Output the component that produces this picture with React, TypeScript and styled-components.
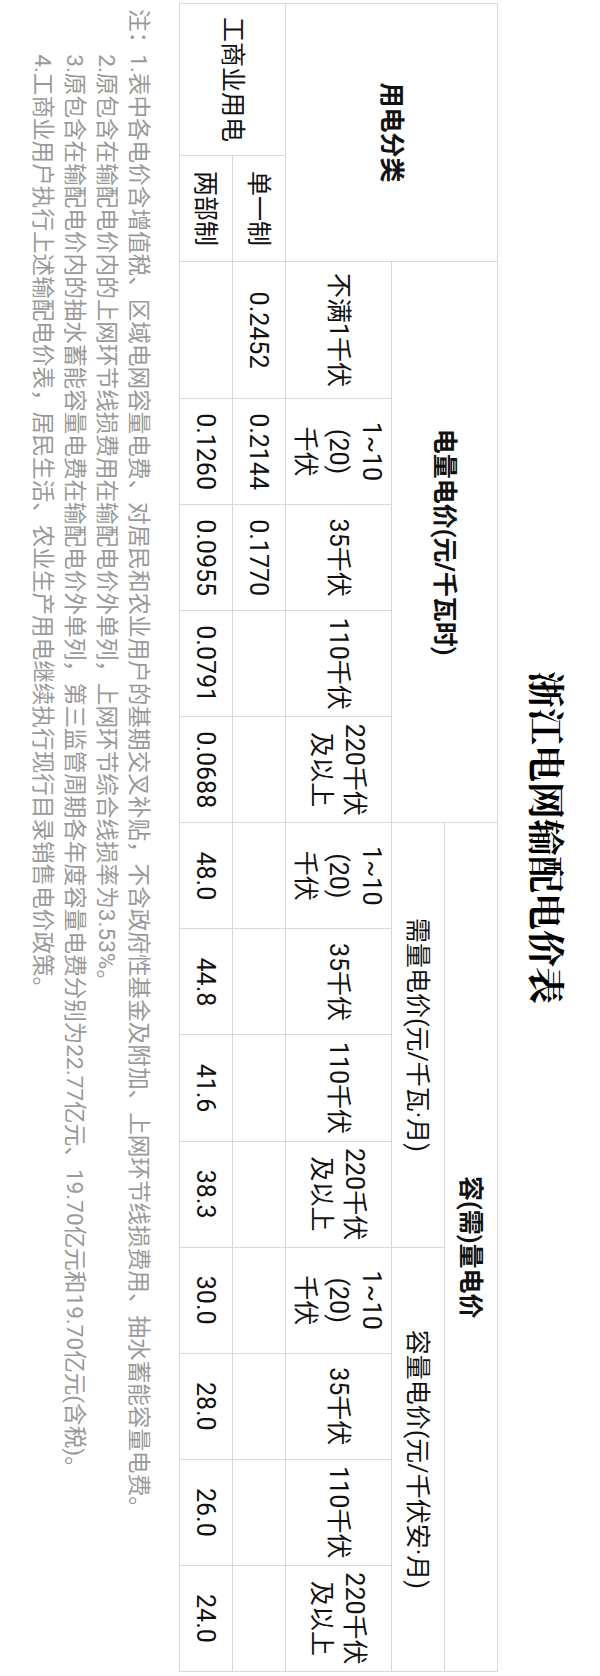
import styled, { createGlobalStyle } from "styled-components";

const GlobalStyle = createGlobalStyle`
  html, body {
    margin: 0;
    padding: 0;
    background: #fff;
  }
  body {
    font-family: Roboto, "Noto Sans CJK SC", sans-serif;
    color: #111;
  }
`;

type CellProps = {
  $bold?: boolean;
};

type RowProps = {
  $h: number;
};

const voltages = ["1~10\n(20)\n千伏", "35千伏", "110千伏", "220千伏\n及以上"];

const singleRow = ["0.2452", "0.2144", "0.1770", "", "", "", "", "", "", "", "", "", ""];
const dualRow = [
  "",
  "0.1260",
  "0.0955",
  "0.0791",
  "0.0688",
  "48.0",
  "44.8",
  "41.6",
  "38.3",
  "30.0",
  "28.0",
  "26.0",
  "24.0",
];

const notes = [
  "1.表中各电价含增值税、区域电网容量电费、对居民和农业用户的基期交叉补贴，不含政府性基金及附加、上网环节线损费用、抽水蓄能容量电费。",
  "2.原包含在输配电价内的上网环节线损费用在输配电价外单列，上网环节综合线损率为3.53%。",
  "3.原包含在输配电价内的抽水蓄能容量电费在输配电价外单列，第三监管周期各年度容量电费分别为22.77亿元、19.70亿元和19.70亿元(含税)。",
  "4.工商业用户执行上述输配电价表，居民生活、农业生产用电继续执行现行目录销售电价政策。",
];

const App = () => {
  return (
    <Page>
      <GlobalStyle />
      <Sheet>
        <Title>浙江电网输配电价表</Title>
        <Table>
          <colgroup>
            <col style={{ width: 152 }} />
            <col style={{ width: 106 }} />
            <col style={{ width: 137 }} />
            {Array.from({ length: 12 }).map((_, i) => (
              <col key={i} />
            ))}
          </colgroup>
          <tbody>
            <Row $h={53}>
              <Cell $bold colSpan={2} rowSpan={3}>
                用电分类
              </Cell>
              <Cell $bold colSpan={5} rowSpan={2}>
                电量电价(元/千瓦时)
              </Cell>
              <Cell $bold colSpan={8}>
                容(需)量电价
              </Cell>
            </Row>
            <Row $h={53}>
              <Cell colSpan={4}>需量电价(元/千瓦·月)</Cell>
              <Cell colSpan={4}>容量电价(元/千伏安·月)</Cell>
            </Row>
            <Row $h={106}>
              <Cell>不满1千伏</Cell>
              {[...voltages, ...voltages, ...voltages].map((v, i) => (
                <Cell key={i}>{v}</Cell>
              ))}
            </Row>
            <Row $h={53}>
              <Cell rowSpan={2}>工商业用电</Cell>
              <Cell>单一制</Cell>
              {singleRow.map((v, i) => (
                <Cell key={i}>{v}</Cell>
              ))}
            </Row>
            <Row $h={53}>
              <Cell>两部制</Cell>
              {dualRow.map((v, i) => (
                <Cell key={i}>{v}</Cell>
              ))}
            </Row>
          </tbody>
        </Table>
        <Notes>
          <NoteLabel>注：</NoteLabel>
          <NoteList>
            {notes.map((n) => (
              <NoteLine key={n}>{n}</NoteLine>
            ))}
          </NoteList>
        </Notes>
      </Sheet>
    </Page>
  );
};

const Page = styled.div`
  width: 600px;
  height: 1676px;
  overflow: hidden;
`;

const Sheet = styled.div`
  width: 1676px;
  height: 600px;
  box-sizing: border-box;
  padding: 30px 4px 0 3px;
  transform-origin: 0 0;
  transform: translateX(600px) rotate(90deg);
`;

const Title = styled.h1`
  margin: 0 0 28px;
  text-align: center;
  font-family: "Noto Serif CJK SC", "Noto Sans CJK SC", serif;
  font-size: 37px;
  line-height: 44px;
  font-weight: 700;
  color: #000;
`;

const Table = styled.table`
  width: 1669px;
  border-collapse: collapse;
  table-layout: fixed;
`;

const Row = styled.tr<RowProps>`
  height: ${(p) => p.$h}px;
`;

const Cell = styled.td<CellProps>`
  border: 1px solid #d8d8d8;
  padding: 0 2px;
  text-align: center;
  vertical-align: middle;
  font-size: 25px;
  line-height: 33px;
  font-weight: ${(p) => (p.$bold ? 700 : 400)};
  color: #111;
  white-space: pre-line;
`;

const Notes = styled.div`
  display: flex;
  margin: 25px 0 0 6px;
  color: #999;
  font-size: 22.6px;
  line-height: 32px;
`;

const NoteLabel = styled.span`
  flex: none;
`;

const NoteList = styled.div`
  display: flex;
  flex-direction: column;
`;

const NoteLine = styled.p`
  margin: 0;
  white-space: nowrap;
`;

export default App;
